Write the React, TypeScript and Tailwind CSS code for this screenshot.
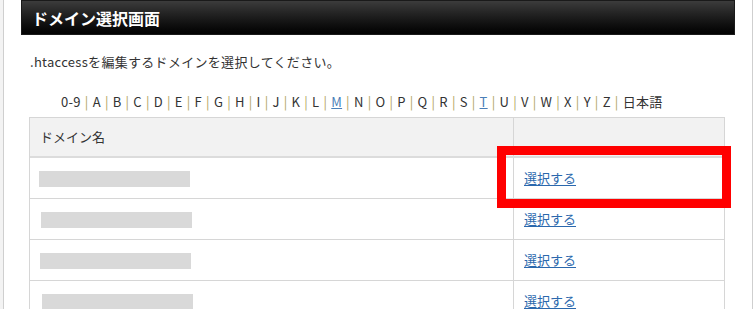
const letters = ['0-9', 'A', 'B', 'C', 'D', 'E', 'F', 'G', 'H', 'I', 'J', 'K', 'L', 'M', 'N', 'O', 'P', 'Q', 'R', 'S', 'T', 'U', 'V', 'W', 'X', 'Y', 'Z', '日本語'];
const linked = ['M', 'T'];

const rows = [
  { blur: 'ml-[9px] mt-[1px]' },
  { blur: 'ml-[11px] mt-[2px]' },
  { blur: 'ml-[10px] mt-[1px]' },
  { blur: 'ml-[12px] mt-[2px]' },
];

const App = () => {
  return (
    <div
      className="relative w-[756px] h-[309px] overflow-hidden bg-white flex text-[#333]"
      style={{ fontFamily: '"Noto Sans CJK JP", "Open Sans", sans-serif' }}
    >
      {/* left frame edge */}
      <div className="w-[4px] h-full bg-[#f3f3f3] border-r border-[#cfcfcf]" />

      {/* main panel */}
      <div className="w-[749px] h-full border-r border-[#cfcfcf] pl-[17px]">
        {/* title bar */}
        <div className="w-[714px] h-[35px] bg-gradient-to-b from-[#3c3c3c] to-[#030303] border border-[#1a1a1a] flex items-center pl-[10px]">
          <h1 className="text-white text-[16px] font-bold">ドメイン選択画面</h1>
        </div>

        <p className="mt-[18px] ml-[9px] text-[13px] leading-[18px] tracking-[0.3px]">
          .htaccessを編集するドメインを選択してください。
        </p>

        {/* index nav */}
        <div className="mt-[22px] ml-[40px] flex text-[13px] leading-[18px] tracking-[0.3px]">
          {letters.map((l, i) => (
            <span key={l} className="flex">
              {linked.includes(l) ? (
                <a className="text-[#4a7fb8] underline">{l}</a>
              ) : (
                <span>{l}</span>
              )}
              {i < letters.length - 1 && <span className="text-[#b0a25e] px-[4px]">|</span>}
            </span>
          ))}
        </div>

        {/* domain table */}
        <div className="mt-[6px] ml-[8px] w-[696px] border border-[#d6d6d6] text-[13px]">
          <div className="flex h-[40px] bg-[#f2f2f2] border-b-2 border-[#dcdcdc]">
            <div className="w-[484px] border-r border-[#d6d6d6] flex items-center pl-[10px]">ドメイン名</div>
            <div className="flex-1" />
          </div>
          {rows.map((r, i) => (
            <div key={i} className="flex h-[41px] border-b border-[#d6d6d6]">
              <div className="w-[484px] border-r border-[#d6d6d6] flex items-center">
                <div className={`w-[151px] h-[16px] bg-[#d9d9d9] ${r.blur}`} />
              </div>
              <div className="flex-1 flex items-center pl-[10px]">
                <a className="text-[#2b68ad] underline underline-offset-2">選択する</a>
              </div>
            </div>
          ))}
        </div>
      </div>

      {/* annotation frame */}
      <div className="absolute left-[497px] top-[146px] w-[234px] h-[62px] border-[9px] border-[#ff0000]" />
    </div>
  );
};

export default App;
